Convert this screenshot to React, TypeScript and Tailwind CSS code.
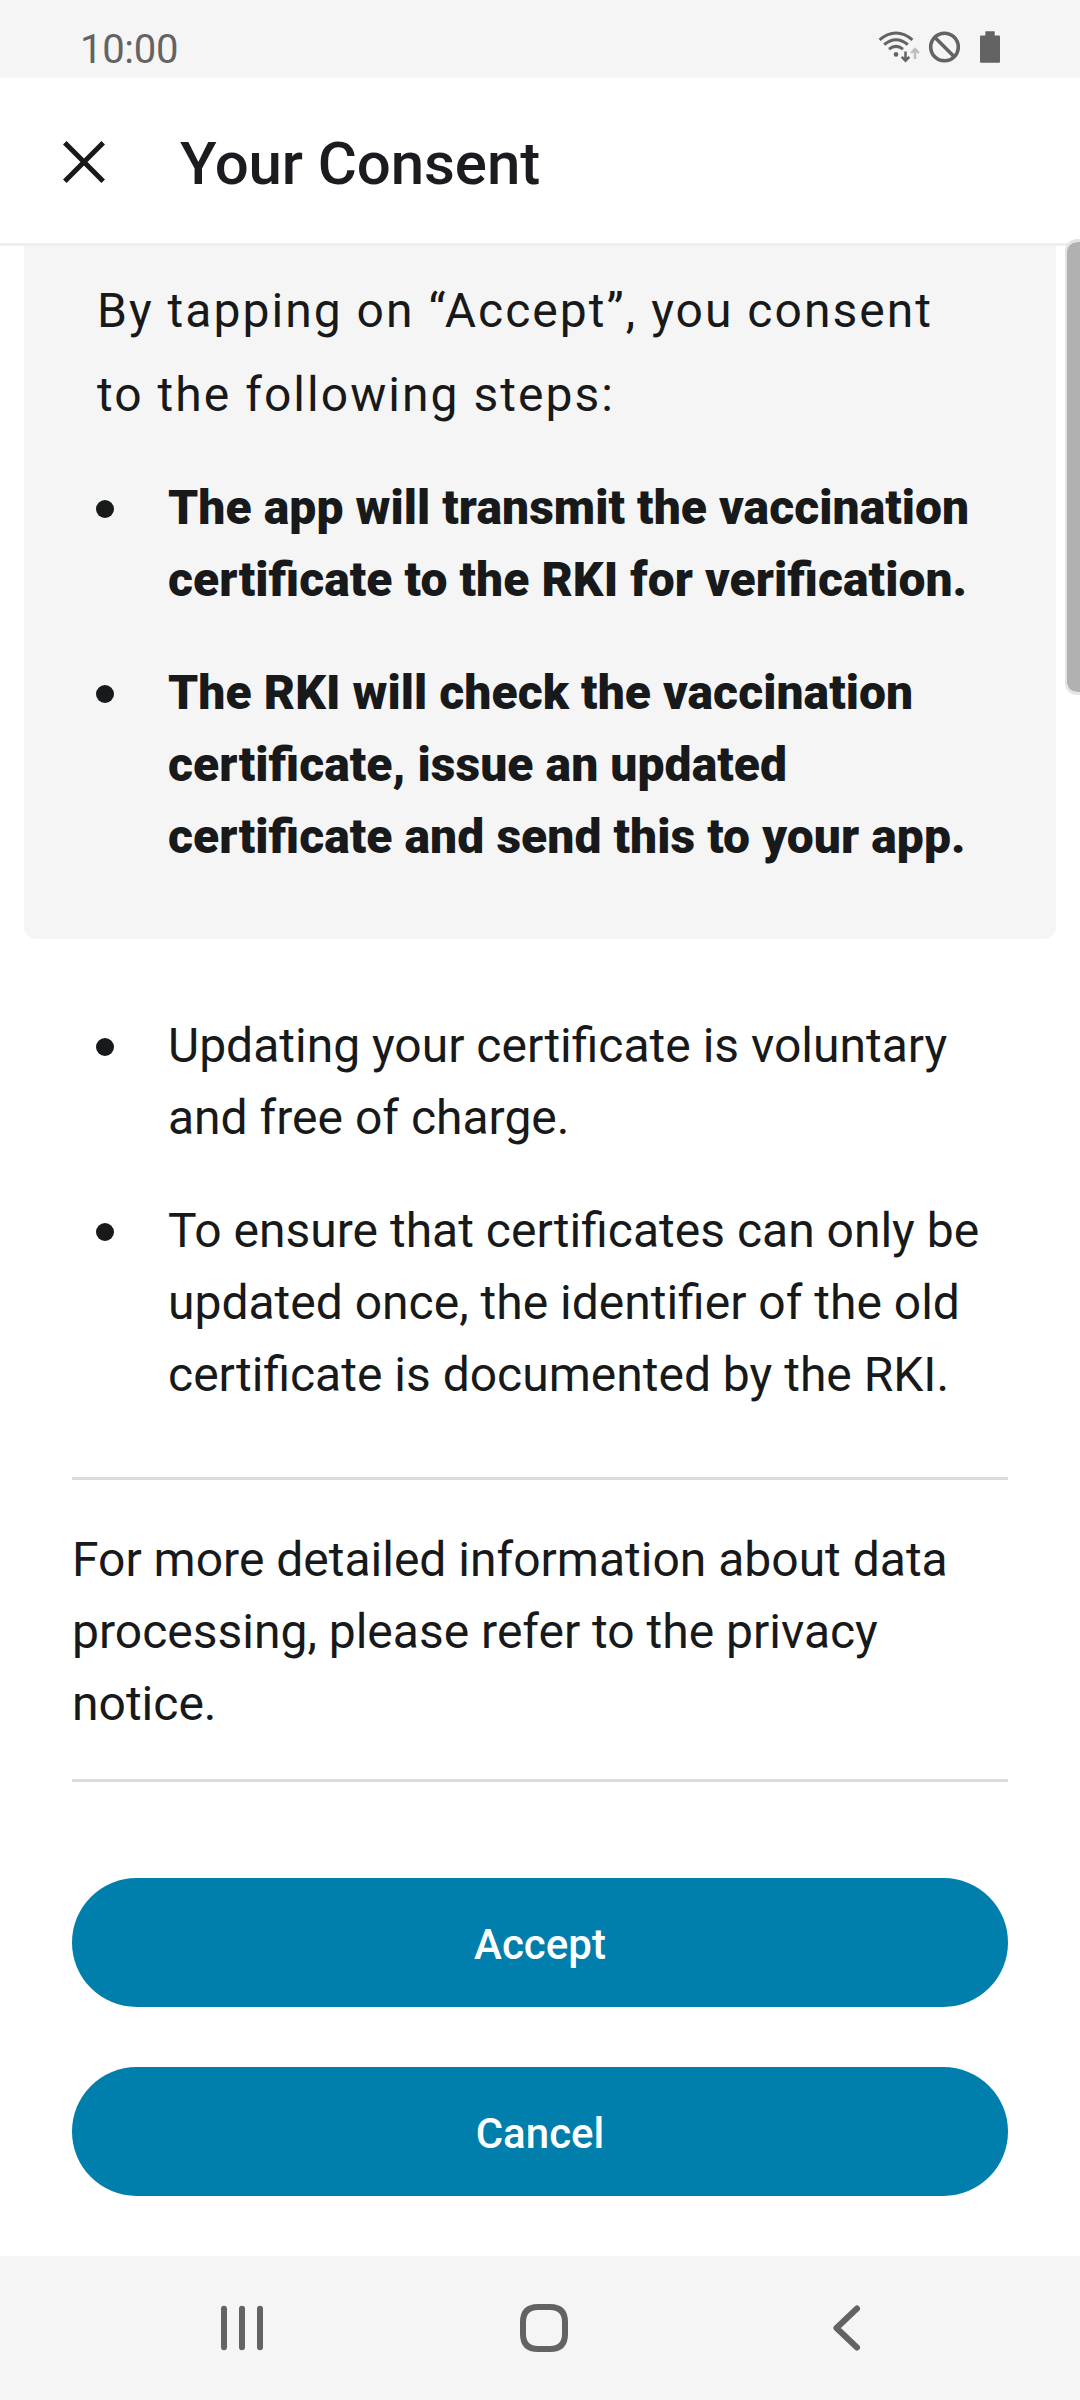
const dot = "mt-[28px] ml-[-72px] mr-[54px] h-[18px] w-[18px] shrink-0 rounded-full bg-[#17191a]";

function StatusIcons() {
  return (
    <svg className="mt-[15px] h-[36px] w-[124px]" viewBox="877 29 124 36" fill="none" stroke="#636363">
      <g strokeWidth="3">
        <path d="M879.6 39.8Q896 26.2 912.4 39.8" />
        <path d="M884.2 44.6Q896 34.8 907.8 44.6" />
        <path d="M889 49.2Q896 43.6 903 49.2" />
      </g>
      <circle cx="896" cy="54.4" r="2.3" fill="#636363" stroke="none" />
      <path d="M905.5 51.5v9M901.7 56.8l3.8 4 3.8-4" strokeWidth="2.5" />
      <path d="M915 59v-9.5M911.2 53l3.8-4 3.8 4" stroke="#bdbdbd" strokeWidth="2.5" />
      <circle cx="944.5" cy="47" r="13.8" strokeWidth="3.6" />
      <path d="M934.5 37l20 20" strokeWidth="3.6" />
      <path d="M986 31.3h8q.7 0 .7.7v3.4h4.3q1 0 1 1v25.3q0 1-1 1h-18q-1 0-1-1v-25.3q0-1 1-1h4.3v-3.4q0-.7.7-.7z" fill="#636363" stroke="none" />
    </svg>
  );
}

export default function App() {
  return (
    <div className="relative flex h-[2400px] w-[1080px] flex-col overflow-hidden bg-white font-['Roboto',sans-serif] text-[#17191a]">
      <div className="flex h-[78px] shrink-0 items-center justify-between bg-[#f5f5f5] pl-[80px] pr-[79px] text-[40px] text-[#636363]">
        <span className="mt-[20px] leading-[47px] tracking-[-0.3px]">10:00</span>
        <StatusIcons />
      </div>
      <header className="flex h-[168px] shrink-0 items-center border-b-3 border-[#eeeeee]">
        <svg className="ml-[62px] mt-[3px] h-[44px] w-[44px]" viewBox="0 0 44 44" fill="none" stroke="#17191a" strokeWidth="5"><path d="M2.8 2.8l38.4 38.4M41.2 2.8L2.8 41.2" /></svg>
        <h1 className="ml-[74px] mt-[6px] text-[60px] font-medium tracking-[-0.1px] text-[#1c1b1f]">Your Consent</h1>
      </header>
      <section className="mx-[24px] h-[693px] shrink-0 rounded-b-[12px] bg-[#f5f5f5] pl-[72px]">
        <p className="pl-[1px] pt-[23px] text-[48px] leading-[84px] tracking-[2.03px]">By tapping on “Accept”, you consent<br />to the following steps:</p>
        <ul className="pl-[72px] text-[48px] font-black leading-[72px] tracking-[0.07px] [font-feature-settings:'liga'_1]">
          <li className="mt-[35px] flex"><i className={dot} /><span>The app will transmit the vaccination<br />certificate to the RKI for verification.</span></li>
          <li className="mt-[41px] flex"><i className={dot} /><span>The RKI will check the vaccination<br />certificate, issue an updated<br />certificate and send this to your app.</span></li>
        </ul>
      </section>
      <ul className="pl-[168px] pt-[71px] text-[48px] leading-[72px]">
        <li className="flex"><i className={dot} /><span>Updating your certificate is voluntary<br />and free of charge.</span></li>
        <li className="mt-[41px] flex"><i className={dot} /><span>To ensure that certificates can only be<br />updated once, the identifier of the old<br />certificate is documented by the RKI.</span></li>
      </ul>
      <p className="mx-[72px] mt-[66px] border-y-3 border-[#dcdcdc] pt-[44px] pb-[39px] text-[48px] leading-[72px]">For more detailed information about data<br />processing, please refer to the privacy<br />notice.</p>
      <div className="mx-[72px] mt-[96px] flex flex-col gap-[60px] text-[42px] font-medium text-white">
        <button className="h-[129px] rounded-full bg-[#007fad] pt-[3px]">Accept</button>
        <button className="h-[129px] rounded-full bg-[#007fad] pt-[3px]">Cancel</button>
      </div>
      <nav className="mt-auto flex h-[144px] shrink-0 items-center justify-between bg-[#f5f5f5] pl-[218px] pr-[218px]">
        <svg className="h-[48px] w-[48px]" viewBox="218 2304 48 48" stroke="#636363" strokeWidth="6" strokeLinecap="round"><path d="M224 2308.8v38.4M242 2308.8v38.4M260 2308.8v38.4" /></svg>
        <svg className="ml-[-8px] h-[48px] w-[48px]" viewBox="0 0 48 48" fill="none" stroke="#636363" strokeWidth="6"><path d="M18 3H30Q45 3 45 18V30Q45 45 30 45H18Q3 45 3 30V18Q3 3 18 3Z" /></svg>
        <svg className="h-[48px] w-[32px]" viewBox="830 2304 32 48" fill="none" stroke="#636363" strokeWidth="6" strokeLinecap="round" strokeLinejoin="round"><path d="M857 2308.5L836.5 2328 857 2347.5" /></svg>
      </nav>
      {/* Scroll position indicator overlaid on the right edge */}
      <div className="absolute top-[239px] right-0 h-[456px] w-[15px] rounded-l-[12px] border-y-3 border-l-2 border-[#e4e4e4] bg-[#b1b1b1] bg-clip-padding" />
    </div>
  );
}
